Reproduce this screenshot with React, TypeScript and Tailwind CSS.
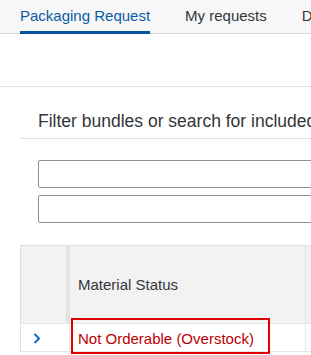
import React from "react";

export default function App() {
  return (
    <div className="w-[311px] h-[355px] overflow-hidden bg-white font-['Liberation_Sans',Arial,sans-serif] text-[#32363a]">
      {/* Tab bar */}
      <div className="h-[34px] bg-[#f7f7f7] shadow-[inset_0_-1px_0_#d9d9d9] flex pl-5 gap-[35px] whitespace-nowrap text-[15px]">
        <div className="h-full flex items-center border-b-[3px] border-[#0854a0] text-[#0a5ca8] pt-[2px]">
          Packaging Request
        </div>
        <div className="h-full flex items-center pb-[1px]">My requests</div>
        <div className="h-full flex items-center pb-[1px]">Drafts</div>
      </div>
      <div className="h-[53px] border-b border-[#e0e0e0]" />
      <div className="pl-5">
        <div className="h-[52px] border-b border-[#e0e0e0] pl-[18px] flex items-end pb-[4px] text-[17.5px] whitespace-nowrap overflow-hidden">
          Filter bundles or search for included materials
        </div>
        <div className="pl-[18px] pt-[21px] flex flex-col gap-[7px]">
          <div className="h-[28px] w-[400px] border border-[#89919a] rounded-[2px]" />
          <div className="h-[28px] w-[400px] border border-[#89919a] rounded-[2px]" />
        </div>
        <div className="relative mt-[22px] w-[400px] border-t border-l border-[#e0e0e0]">
          <div className="flex h-[78px] bg-[#f2f2f2] border-b border-[#e5e5e5]">
            <div className="w-[45px]" />
            <div className="w-[4px] bg-[#e3e3e3]" />
            <div className="w-[236px] flex items-center pl-[8px] text-[15px] border-r border-[#e5e5e5] pt-[1px]">
              Material Status
            </div>
            <div className="flex-1" />
          </div>
          <div className="flex h-[28px] border-b border-[#e5e5e5]">
            <div className="w-[49px] flex items-center pl-[12px] pt-[2px] border-r border-[#e5e5e5]">
              <svg width="8" height="11" viewBox="0 0 8 11">
                <polyline points="1.5,1 6,5.5 1.5,10" fill="none" stroke="#0a6ed1" strokeWidth="2" />
              </svg>
            </div>
            <div className="w-[236px] flex items-center pl-[8px] pt-[3px] text-[15px] text-[#bb0000] border-r border-[#e5e5e5] whitespace-nowrap">
              Not Orderable (Overstock)
            </div>
            <div className="flex-1" />
          </div>
          <div className="absolute left-[50px] top-[72px] w-[199px] h-[36px] border-2 border-[#e00000]" />
        </div>
      </div>
    </div>
  );
}
